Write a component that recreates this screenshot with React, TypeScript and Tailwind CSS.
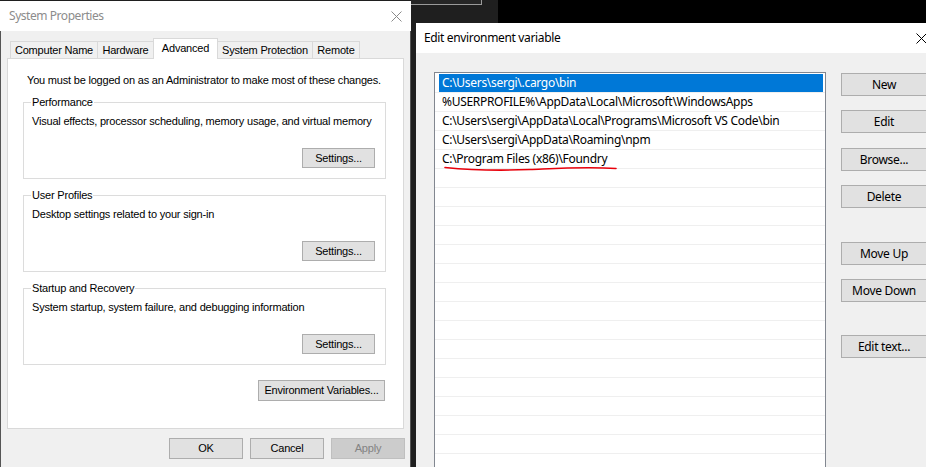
import React from "react";

const leftFont = "font-['Liberation_Sans',Arial,sans-serif] text-[11px] tracking-[-0.2px] text-black";
const rightFont = "font-['Noto_Sans','Open_Sans',sans-serif] text-[12px] tracking-[-0.3px] text-black";

function CloseX({ color = "#777" }: { color?: string }) {
  return (
    <svg width="11" height="11" viewBox="0 0 11 11">
      <path d="M0.5 0.5 L10.5 10.5 M10.5 0.5 L0.5 10.5" stroke={color} strokeWidth="1" fill="none" />
    </svg>
  );
}

function WinButton({ label, className = "", disabled = false }: { label: string; className?: string; disabled?: boolean }) {
  return (
    <div
      className={`flex shrink-0 items-center justify-center border ${
        disabled ? "border-[#bfbfbf] bg-[#cccccc] text-[#838383]" : "border-[#adadad] bg-[#e1e1e1]"
      } ${className}`}
    >
      {label}
    </div>
  );
}

function GroupBox({ title, text }: { title: string; text: string }) {
  return (
    <fieldset className="h-[83px] border border-[#dcdcdc] flex flex-col">
      <legend className="ml-[7px] px-[1px] leading-[13px]">{title}</legend>
      <div className="pl-[8px] mt-[6px] leading-[13px]">{text}</div>
      <div className="flex justify-end pr-[10px] mt-[20px]">
        <WinButton label="Settings..." className="w-[73px] h-[20px]" />
      </div>
    </fieldset>
  );
}

const tabs = [
  { name: "Computer Name", w: "w-[88px]" },
  { name: "Hardware", w: "w-[57px]" },
  { name: "Advanced", w: "w-[65px]", active: true },
  { name: "System Protection", w: "w-[96px]" },
  { name: "Remote", w: "w-[48px]" },
];

function SystemProperties() {
  return (
    <div className={`w-[411px] h-full shrink-0 pt-[1px] flex flex-col ${leftFont}`}>
      {/* title bar */}
      <div className="h-[30px] shrink-0 bg-white flex items-center justify-between pl-[9px] pr-[9px]">
        <span className="font-['Noto_Sans',sans-serif] text-[12px] tracking-[-0.45px] text-[#8c8c8c]">System Properties</span>
        <CloseX color="#8a8a8a" />
      </div>

      <div className="flex-1 bg-[#f0f0f0] border-l border-r border-[#555] flex flex-col">
        {/* tabs */}
        <div className="h-[27px] shrink-0 pt-[7px] flex items-end pl-[9px]">
          {tabs.map((t, i) =>
            t.active ? (
              <div
                key={t.name}
                className={`${t.w} h-[21px] -mb-[1px] -ml-[1px] relative z-10 bg-white border border-b-0 border-[#d9d9d9] flex items-center justify-center pb-[2px]`}
              >
                {t.name}
              </div>
            ) : (
              <div
                key={t.name}
                className={`${t.w} h-[17px] ${i > 0 ? "-ml-[1px]" : ""} border border-b-0 border-[#d9d9d9] bg-[#f0f0f0] flex items-center justify-center`}
              >
                {t.name}
              </div>
            )
          )}
        </div>

        {/* tab panel */}
        <div className="ml-[6px] w-[397px] h-[371px] shrink-0 bg-white border border-[#d9d9d9] pl-[15px] pr-[17px] flex flex-col">
          <div className="mt-[15px] pl-[4px] leading-[13px]">
            You must be logged on as an Administrator to make most of these changes.
          </div>
          <div className="mt-[9px] flex flex-col gap-[10px]">
            <GroupBox title="Performance" text="Visual effects, processor scheduling, memory usage, and virtual memory" />
            <GroupBox title="User Profiles" text="Desktop settings related to your sign-in" />
            <GroupBox title="Startup and Recovery" text="System startup, system failure, and debugging information" />
          </div>
          <div className="flex justify-end mt-[15px] pr-[1px]">
            <WinButton label="Environment Variables..." className="w-[127px] h-[21px]" />
          </div>
        </div>

        {/* dialog buttons */}
        <div className="flex justify-end gap-[7px] pr-[5px] mt-[9px]">
          <WinButton label="OK" className="w-[74px] h-[21px]" />
          <WinButton label="Cancel" className="w-[74px] h-[21px]" />
          <WinButton label="Apply" className="w-[74px] h-[21px]" disabled />
        </div>
      </div>
    </div>
  );
}

const paths = [
  "C:\\Users\\sergi\\.cargo\\bin",
  "%USERPROFILE%\\AppData\\Local\\Microsoft\\WindowsApps",
  "C:\\Users\\sergi\\AppData\\Local\\Programs\\Microsoft VS Code\\bin",
  "C:\\Users\\sergi\\AppData\\Roaming\\npm",
  "C:\\Program Files (x86)\\Foundry",
];

const rows = [...paths, ...Array.from({ length: 17 }, () => "")];

const sideButtons = [
  { label: "New", mt: "mt-[1px]" },
  { label: "Edit", mt: "mt-[14px]" },
  { label: "Browse...", mt: "mt-[15px]" },
  { label: "Delete", mt: "mt-[14px]" },
  { label: "Move Up", mt: "mt-[34px]" },
  { label: "Move Down", mt: "mt-[14px]" },
  { label: "Edit text...", mt: "mt-[33px]" },
];

function EditEnvDialog() {
  return (
    <div className={`w-[530px] shrink-0 h-[444px] bg-[#f0f0f0] flex flex-col ${rightFont}`}>
      <div className="h-[30px] shrink-0 bg-white flex items-center justify-between pl-[8px] pr-[19px]">
        <span className="tracking-[-0.35px]">Edit environment variable</span>
        <CloseX color="#000" />
      </div>
      <div className="flex-1 min-h-0 flex pl-[18px] pt-[19px] gap-[15px]">
        <div className="w-[392px] h-[420px] shrink-0 border border-[#828790] bg-white pt-[1px] relative overflow-hidden">
          {rows.map((r, i) => (
            <div key={i} className="h-[19px] border-b border-[#efefef]">
              <div
                className={`ml-[4px] mr-[2px] pl-[3px] h-[18px] leading-[18px] whitespace-nowrap ${
                  i === 0 ? "bg-[#0078d7] text-white" : ""
                }`}
              >
                {r}
              </div>
            </div>
          ))}
          {/* red hand-drawn underline */}
          <svg className="absolute left-0 top-0" width="392" height="120" viewBox="0 0 392 120">
            <path
              d="M10 94.5 C 40 97.5, 70 97.5, 95 96.5 S 150 93.5, 181 95.5"
              stroke="#e8000b"
              strokeWidth="1.6"
              fill="none"
              strokeLinecap="round"
            />
          </svg>
        </div>
        <div className="w-[86px] shrink-0 flex flex-col">
          {sideButtons.map((b) => (
            <WinButton key={b.label} label={b.label} className={`h-[23px] ${b.mt}`} />
          ))}
        </div>
      </div>
    </div>
  );
}

export default function App() {
  return (
    <div className="w-[926px] h-[467px] overflow-hidden bg-[#1f1f1f] flex">
      <SystemProperties />
      <div className="flex-1 flex flex-col">
        {/* background window fragment */}
        <div className="h-[23px] flex shrink-0">
          <div className="w-[71px] h-[5px] border-b border-r border-[#9a9a9a] bg-[#262626]" />
          <div className="w-[16px]" />
          <div className="flex-1 bg-black" />
        </div>
        <div className="flex">
          <div className="w-[5px] shrink-0" />
          <EditEnvDialog />
        </div>
      </div>
    </div>
  );
}
